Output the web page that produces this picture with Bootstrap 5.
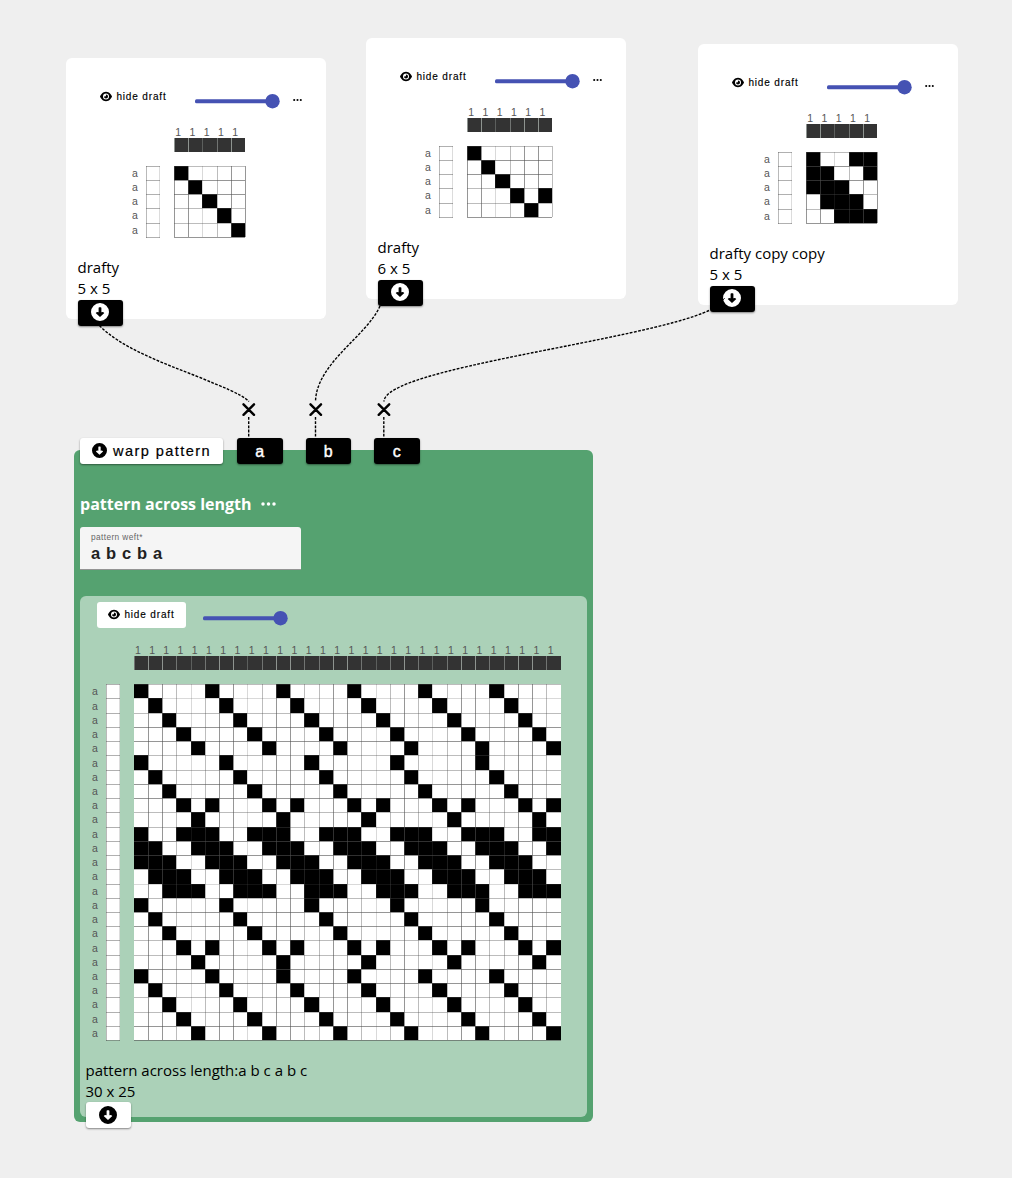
<!DOCTYPE html>
<html lang="en">
<head>
<meta charset="utf-8">
<title>Draft workspace</title>
<link href="https://cdn.jsdelivr.net/npm/bootstrap@5.3.0/dist/css/bootstrap.min.css" rel="stylesheet">
<style>
body{background:#efefef;color:#000;font-family:"Open Sans","Noto Sans",sans-serif;font-size:15px;line-height:21.3px}
.canvas{width:1012px;height:1178px}
.node{position:absolute}
.draft-node{width:260px;height:261px;border-radius:6px;background:#fff}
.node-one{left:66px;top:58px}
.node-two{left:366px;top:38px}
.node-three{left:698px;top:44px}
.op-node{left:74px;top:450px;width:518.5px;height:672px;border-radius:6px;background:#55a270;padding:0 6px}
.ui-text{font-family:"Liberation Sans",Arial,sans-serif}
.toggle{border:0;border-radius:3px;background:#fff;color:#000;width:89px;height:26px;font-size:10px;line-height:26px;letter-spacing:.85px;font-weight:400;-webkit-text-stroke:.15px #000;padding:0}
.toggle svg{width:12px;height:11px;margin:-1px 4px 0 0}
.tools{padding:26px 0 0 23px;height:68px}
.track{width:86px;height:15px;margin:9.5px 0 0 17px}
.dots{width:9px;height:4px;margin:14px 0 0 12px}
.plot{width:247px}
.port{width:45.5px;height:26px;border-radius:3px;background:#000;color:#fff;box-shadow:0 1px 2px rgba(0,0,0,.45)}
.port.pale{background:#fff;color:#000}
.port svg{width:18px;height:18px;margin:-1px 1.5px 0 0}
.caption{padding:18px 0 0 11.5px}
.tabs{margin-top:-12px;height:26px}
.tabs .port{font-size:16px;-webkit-text-stroke:.4px #fff;padding-top:1px;margin-left:-.5px}
.tabs .port + .port{margin-left:23px}
.tabs .pale.named{width:143px;font-size:14.6px;letter-spacing:1.4px;-webkit-text-stroke:.2px #000;margin-left:0;margin-right:14px}
.named svg{width:15px;height:15px;margin:-2px 6px 0 0}
.op-title{font-weight:700;font-size:16px;color:#fff;margin-top:29px;height:22px;line-height:22px}
.op-title svg{width:15px;height:4px;margin-left:9px}
.pattern-field{width:221px;height:42.5px;margin-top:12px;background:#f5f5f5;border-radius:3px 3px 0 0;border-bottom:1px solid #949494;padding:5px 11px}
.pattern-field label{font-size:8.3px;line-height:11px;color:#666;letter-spacing:.4px}
.pattern-field span{font-size:16.5px;line-height:21px;font-weight:700;color:#212121;letter-spacing:.65px}
.result{margin-top:26.500px;height:520.5px;width:507px;border-radius:6px;background:#abd1b8}
.result-tools{padding:5.500px 0 0 17px;height:48px}
.result-caption{padding:17.500px 0 0 5.5px}
.draft text{font-family:"Liberation Sans",Arial,sans-serif;font-size:10.5px;fill:#555}
.wires{left:0;top:0;pointer-events:none}
</style>
</head>
<body>
<svg class="d-none">
  <symbol id="eye" viewBox="0 0 576 512"><path fill="currentColor" d="M288 32c-81 0-146 37-193 80C49 156 17 208 3 244c-3 8-3 16 0 24 14 36 46 88 92 132 47 43 112 80 193 80s146-37 193-80c46-44 78-96 92-132 3-8 3-16 0-24-14-36-46-88-92-132C434 69 369 32 288 32zM144 256a144 144 0 1 1 288 0 144 144 0 1 1-288 0zm144-64c0 35-29 64-64 64-12 0-23-3-32-9-1 3-1 6-1 9a97 97 0 1 0 97-97c-3 0-6 0-9 1 6 9 9 20 9 32z"/></symbol>
  <symbol id="down" viewBox="0 0 18 18"><path fill="currentColor" fill-rule="evenodd" d="M9 0a9 9 0 1 1 0 18A9 9 0 0 1 9 0zM7.6 4.9v4.3L6 8.9 4.7 10.1 9 14l4.3-3.9L12 8.900l-1.600.300V4.900q0-.700-.700-.700H8.300q-.700 0-.700.700z"/></symbol>
  <symbol id="dots" viewBox="0 0 15 4"><g fill="currentColor"><circle cx="2" cy="2" r="1.75"/><circle cx="7.5" cy="2" r="1.75"/><circle cx="13" cy="2" r="1.75"/></g></symbol>
  <symbol id="slider" viewBox="0 0 86 15"><rect y="5.200" width="80" height="4" rx="1.5" fill="#4552b3"/><circle cx="77.500" cy="7.200" r="7.200" fill="#4552b3"/></symbol>
</svg>

<main class="canvas position-relative overflow-hidden">
  <section class="node draft-node node-one">
    <div class="tools d-flex"><button class="toggle ui-text d-flex align-items-center justify-content-center"><svg><use href="#eye"/></svg>hide draft</button><svg class="track"><use href="#slider"/></svg><svg class="dots"><use href="#dots"/></svg></div>
    <div class="plot d-flex justify-content-center"><svg class="draft" data-cols="5" data-parts="a" data-ox="42.5" data-oy="40.2"></svg></div>
    <div class="caption"><div>drafty</div><div>5 x 5</div><div class="port d-flex align-items-center justify-content-center"><svg><use href="#down"/></svg></div></div>
  </section>

  <section class="node draft-node node-two">
    <div class="tools d-flex"><button class="toggle ui-text d-flex align-items-center justify-content-center"><svg><use href="#eye"/></svg>hide draft</button><svg class="track"><use href="#slider"/></svg><svg class="dots"><use href="#dots"/></svg></div>
    <div class="plot d-flex justify-content-center"><svg class="draft" data-cols="6" data-parts="b" data-ox="42.5" data-oy="40.2"></svg></div>
    <div class="caption"><div>drafty</div><div>6 x 5</div><div class="port d-flex align-items-center justify-content-center"><svg><use href="#down"/></svg></div></div>
  </section>

  <section class="node draft-node node-three">
    <div class="tools d-flex"><button class="toggle ui-text d-flex align-items-center justify-content-center"><svg><use href="#eye"/></svg>hide draft</button><svg class="track"><use href="#slider"/></svg><svg class="dots"><use href="#dots"/></svg></div>
    <div class="plot d-flex justify-content-center"><svg class="draft" data-cols="5" data-parts="c" data-ox="42.5" data-oy="40.2"></svg></div>
    <div class="caption"><div>drafty copy copy</div><div>5 x 5</div><div class="port d-flex align-items-center justify-content-center"><svg><use href="#down"/></svg></div></div>
  </section>

  <section class="node op-node">
    <div class="tabs d-flex ui-text">
      <div class="port pale named d-flex align-items-center justify-content-center"><svg><use href="#down"/></svg>warp pattern</div>
      <div class="port ms-0 d-flex align-items-center justify-content-center">a</div>
      <div class="port d-flex align-items-center justify-content-center">b</div>
      <div class="port d-flex align-items-center justify-content-center">c</div>
    </div>
    <div class="op-title d-flex align-items-center">pattern across length<svg><use href="#dots"/></svg></div>
    <div class="pattern-field ui-text d-flex flex-column"><label>pattern weft*</label><span>a b c b a</span></div>
    <div class="result">
      <div class="result-tools d-flex"><button class="toggle ui-text d-flex align-items-center justify-content-center"><svg><use href="#eye"/></svg>hide draft</button><svg class="track"><use href="#slider"/></svg></div>
      <div class="d-flex ps-2 ms-1"><svg class="draft" data-cols="30" data-parts="abcba" data-ox="42.1" data-oy="40.75" data-open="1"></svg></div>
      <div class="result-caption"><div>pattern across length:a b c a b c</div><div>30 x 25</div><div class="port pale d-flex align-items-center justify-content-center"><svg><use href="#down"/></svg></div></div>
    </div>
  </section>

  <svg class="wires position-absolute" width="1012" height="1178" fill="none" stroke="#000">
    <g stroke-width="1.4" stroke-dasharray="2.8 1.4">
      <path d="M99.5 325.5C120 347 160 362 200 377.500C222 387 240 393 249 401.500"/>
      <path d="M380 306C367 336 316.500 363 315.500 401.500"/>
      <path d="M709 310.500C643 341 384 368 384 401.500"/>
      <path d="M248.700 417V438M315.500 417V438M383.800 417V438"/>
    </g>
    <g stroke-width="2.4" stroke-linecap="round">
      <path d="M243.500 404.300l10.500 10.500m0-10.500l-10.500 10.500M310.500 404.300l10.500 10.500m0-10.500l-10.500 10.500M378.700 404.300l10.500 10.500m0-10.500l-10.500 10.500"/>
      <path stroke-width="1" d="M723.500 299.500l.8-1"/>
    </g>
  </svg>
</main>

<script>
const drafts = {
  a: ['10000','01000','00100','00010','00001'],
  b: ['100000','010000','001000','000101','000010'],
  c: ['10011','11001','11100','01110','00111']
};
const step = 14.233;
// line strength depends on where the line falls inside its pixel
const strength = v => { const f = v - Math.floor(v); return f > .3 && f < .75 ? .6 : (f >= .95 || f < .08 ? .22 : .38); };
document.querySelectorAll('.draft').forEach(el => {
  const cols = +el.dataset.cols, ox = +el.dataset.ox, oy = +el.dataset.oy;
  const rows = [...el.dataset.parts].flatMap(p => drafts[p]);
  const X = i => ox + i * step, Y = j => oy + j * step, F = Math.floor;
  const W = Math.ceil(X(cols)) + 1, H = F(Y(rows.length)) + 2;
  el.setAttribute('width', W); el.setAttribute('height', H);
  const rect = (x, y, w, h, fill, o = 1) => `<rect x="${x}" y="${y}" width="${w}" height="${h}" fill="${fill}" fill-opacity="${o}"/>`;
  const x0 = F(X(0)), x1 = F(X(cols)), y0 = F(Y(0)), y1 = F(Y(rows.length));
  let s = rect(x0, y0, x1 - x0, y1 - y0, '#fff');
  rows.forEach((r, j) => { for (let i = 0; i < cols; i++) if (r[i % r.length] === '1')
    s += rect(F(X(i)), F(Y(j)), F(X(i + 1)) - F(X(i)), F(Y(j + 1)) - F(Y(j)), '#000'); });
  for (let i = 0; i <= cols; i++) if (!el.dataset.open || (i && i < cols)) s += rect(F(X(i)), y0, 1, y1 - y0, '#505050', strength(X(i)));
  for (let j = 0; j <= rows.length; j++) s += rect(x0, F(Y(j)), x1 - x0, 1, '#505050', strength(Y(j)));
  const wy = y0 - 28;
  s += rect(x0, wy, x1 - x0, 14, '#333');
  for (let i = 0; i < cols; i++) {
    s += rect(F(X(i)), wy, 1, 14, '#b5bdb8', strength(X(i)) + .1);
    s += `<text x="${X(i) + .8}" y="${y0 - 30.5}">1</text>`;
  }
  const bx = x0 - 28;
  s += rect(bx, y0, 14, y1 - y0, '#fff') + rect(bx, y0, 1, y1 - y0 + 1, '#505050', .4) + rect(bx + 13, y0, 1, y1 - y0 + 1, '#505050', .2);
  for (let j = 0; j <= rows.length; j++) {
    s += rect(bx, F(Y(j)), 14, 1, '#505050', .45);
    if (j < rows.length) s += `<text x="${x0 - 42}" y="${Y(j) + 10.6}">a</text>`;
  }
  el.innerHTML = s;
});
</script>
<script src="https://cdn.jsdelivr.net/npm/bootstrap@5.3.0/dist/js/bootstrap.bundle.min.js"></script>
</body>
</html>
